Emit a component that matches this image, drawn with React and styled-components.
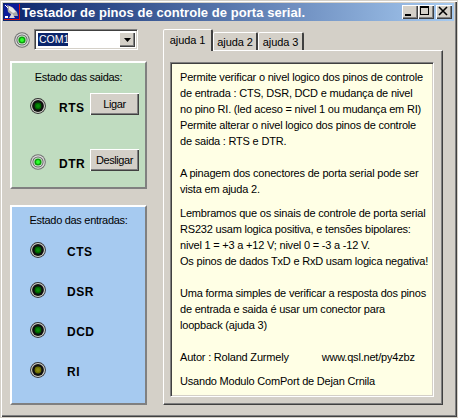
import React from 'react';
import styled, { createGlobalStyle } from 'styled-components';

const GlobalStyle = createGlobalStyle`
  html, body {
    margin: 0;
    padding: 0;
    background: #d4d0c8;
  }
  * {
    box-sizing: border-box;
  }
`;

const LED_COLORS = {
  off: { core: '#006400', hot: '#0a8a0a' },
  amber: { core: '#6e6e00', hot: '#8a8a10' },
};

const Led = ({ state = 'off' }) => {
  if (state === 'on') {
    return (
      <LedIcon viewBox="0 0 16 16">
        <circle cx="8" cy="8" r="7.8" fill="#707070" />
        <circle cx="8" cy="8" r="6.8" fill="#e0e0e0" />
        <circle cx="8" cy="8" r="5.6" fill="#686868" />
        <circle cx="8" cy="8" r="4.6" fill="#d8e8d8" />
        <circle cx="8" cy="8" r="3.6" fill="#0b9f0b" />
        <circle cx="8" cy="8" r="2" fill="#2cff2c" />
      </LedIcon>
    );
  }
  const c = LED_COLORS[state];
  return (
    <LedIcon viewBox="0 0 16 16">
      <circle cx="8" cy="8" r="7.9" fill="#303030" />
      <circle cx="8" cy="8" r="7" fill="#d0d0c8" />
      <circle cx="8" cy="8" r="5.9" fill="#101010" />
      <circle cx="8" cy="8" r="3.4" fill={c.core} />
      <circle cx="8" cy="8" r="2" fill={c.hot} />
    </LedIcon>
  );
};

const AppIcon = () => (
  <AppIconSvg viewBox="0 0 16 16">
    <rect x="0" y="0" width="16" height="16" fill="#d01010" />
    <rect x="0" y="0" width="15" height="15" fill="#0a1a9a" />
    <path d="M3 1 L8 3 L13 8 L14 12 L9 12 L4 8 Z" fill="#a8a8a8" />
    <path d="M5 2 L9 4 L12 8 L9 9 L5 6 Z" fill="#e8e8e8" />
    <path d="M8 9 L5 14 L11 14 Z" fill="#d8d8d8" />
    <path d="M1 1 L4 4" stroke="#ffffff" strokeWidth="1" />
    <rect x="1" y="12" width="3" height="2" fill="#ffffff" />
  </AppIconSvg>
);

const App = () => (
  <Window>
    <GlobalStyle />
    <TitleBar>
      <AppIcon />
      <TitleText>Testador de pinos de controle de porta serial.</TitleText>
      <TitleButtons>
        <CaptionButton aria-label="Minimizar">
          <svg width="14" height="12" viewBox="0 0 14 12">
            <rect x="3" y="9" width="6" height="2" fill="#000" />
          </svg>
        </CaptionButton>
        <CaptionButton aria-label="Maximizar">
          <svg width="14" height="12" viewBox="0 0 14 12">
            <path d="M2 1h9v9H2z M3 3v6h7V3z" fill="#000" fillRule="evenodd" />
          </svg>
        </CaptionButton>
        <CloseButton aria-label="Fechar">
          <svg width="14" height="12" viewBox="0 0 14 12">
            <path d="M3 2l8 8M11 2l-8 8" stroke="#000" strokeWidth="1.6" />
          </svg>
        </CloseButton>
      </TitleButtons>
    </TitleBar>

    <Body>
      <LeftColumn>
        <PortRow>
          <Led state="on" />
          <Combo>
            <ComboValue>COM1</ComboValue>
            <ComboArrow>
              <svg width="7" height="4" viewBox="0 0 7 4">
                <path d="M0 0h7L3.5 4z" fill="#000" />
              </svg>
            </ComboArrow>
          </Combo>
        </PortRow>

        <OutputPanel>
          <PanelTitle>Estado das saidas:</PanelTitle>
          <OutputRows>
            <OutputRow>
              <Led state="off" />
              <PinName $gap={13}>RTS</PinName>
              <Button>Ligar</Button>
            </OutputRow>
            <OutputRow>
              <Led state="on" />
              <PinName $gap={13}>DTR</PinName>
              <Button>Desligar</Button>
            </OutputRow>
          </OutputRows>
        </OutputPanel>

        <InputPanel>
          <PanelTitle>Estado das entradas:</PanelTitle>
          <InputRows>
            <PinRow>
              <Led state="off" />
              <PinName $gap={21}>CTS</PinName>
            </PinRow>
            <PinRow>
              <Led state="off" />
              <PinName $gap={21}>DSR</PinName>
            </PinRow>
            <PinRow>
              <Led state="off" />
              <PinName $gap={21}>DCD</PinName>
            </PinRow>
            <PinRow>
              <Led state="amber" />
              <PinName $gap={21}>RI</PinName>
            </PinRow>
          </InputRows>
        </InputPanel>
      </LeftColumn>

      <TabArea>
        <TabStrip>
          <Tab $width={50} $active>ajuda 1</Tab>
          <Tab $width={45}>ajuda 2</Tab>
          <Tab $width={46}>ajuda 3</Tab>
        </TabStrip>
        <TabPage>
          <HelpBox>
            <HelpBlock>
              <div>Permite verificar o nivel logico dos pinos de controle</div>
              <div>de entrada : CTS, DSR, DCD e mudança de nivel</div>
              <div>no pino RI. (led aceso = nivel 1 ou mudança em RI)</div>
              <div>Permite alterar o nivel logico dos pinos de controle</div>
              <div>de saida : RTS e DTR.</div>
              <br />
              <div>A pinagem dos conectores de porta serial pode ser</div>
              <div>vista em ajuda 2.</div>
            </HelpBlock>
            <HelpBlock>
              <div>Lembramos que os sinais de controle de porta serial</div>
              <div>RS232 usam logica positiva, e tensões bipolares:</div>
              <div>nivel 1 = +3 a +12 V; nivel 0 = -3 a -12 V.</div>
              <div>Os pinos de dados TxD e RxD usam logica negativa!</div>
              <br />
              <div>Uma forma simples de verificar a resposta dos pinos</div>
              <div>de entrada e saida é usar um conector para</div>
              <div>loopback (ajuda 3)</div>
              <br />
              <AuthorLine>
                <span>Autor : Roland Zurmely</span>
                <span>www.qsl.net/py4zbz</span>
              </AuthorLine>
            </HelpBlock>
            <HelpBlock>
              <div>Usando Modulo ComPort de Dejan Crnila</div>
            </HelpBlock>
          </HelpBox>
        </TabPage>
      </TabArea>
    </Body>
  </Window>
);

export default App;

const uiFont = `"Liberation Sans", Arial, sans-serif`;

const Window = styled.div`
  width: 458px;
  height: 418px;
  padding: 2px;
  border: 1px solid #d4d0c8;
  background: #d4d0c8;
  box-shadow: inset 1px 1px #ffffff, inset -1px -1px #404040, inset -2px -2px #808080;
  font-family: ${uiFont};
  font-size: 11px;
  color: #000;
  overflow: hidden;
`;

const TitleBar = styled.div`
  display: flex;
  align-items: center;
  height: 18px;
  width: 451px;
  padding: 0 2px 0 1px;
  background: linear-gradient(to right, #0a246a, #a6caf0);
`;

const AppIconSvg = styled.svg`
  width: 16px;
  height: 16px;
  flex: none;
`;

const TitleText = styled.span`
  margin-left: 2px;
  color: #ffffff;
  font-weight: bold;
  font-size: 13px;
  letter-spacing: 0.05px;
  white-space: nowrap;
`;

const TitleButtons = styled.div`
  display: flex;
  margin-left: auto;
`;

const CaptionButton = styled.div`
  display: flex;
  width: 16px;
  height: 14px;
  background: #d4d0c8;
  box-shadow: inset 1px 1px #ffffff, inset -1px -1px #404040, inset -2px -2px #808080;
`;

const CloseButton = styled(CaptionButton)`
  margin-left: 2px;
`;

const Body = styled.div`
  display: flex;
  padding: 8px 0 0 7px;
`;

const LeftColumn = styled.div`
  display: flex;
  flex-direction: column;
  width: 137px;
  flex: none;
`;

const PortRow = styled.div`
  display: flex;
  align-items: center;
  gap: 4px;
  height: 21px;
  padding-left: 4px;
  margin-bottom: 11px;
`;

const LedIcon = styled.svg`
  width: 16px;
  height: 16px;
  flex: none;
`;

const Combo = styled.div`
  display: flex;
  align-items: center;
  width: 104px;
  height: 21px;
  padding: 2px;
  background: #ffffff;
  border: 1px solid;
  border-color: #808080 #ffffff #ffffff #808080;
  box-shadow: inset 1px 1px #404040, inset -1px -1px #d4d0c8;
`;

const ComboValue = styled.div`
  margin-left: 1px;
  width: 30px;
  height: 13px;
  line-height: 13px;
  padding-left: 1px;
  color: #ffffff;
  background: #0a246a;
  font-size: 10.5px;
  white-space: nowrap;
`;

const ComboArrow = styled.div`
  display: flex;
  align-items: center;
  justify-content: center;
  margin-left: auto;
  width: 16px;
  height: 15px;
  background: #d4d0c8;
  box-shadow: inset 1px 1px #ffffff, inset -1px -1px #404040, inset -2px -2px #808080;
`;

const Panel = styled.div`
  width: 137px;
  border: 2px solid;
  border-color: #ffffff #808080 #808080 #ffffff;
`;

const OutputPanel = styled(Panel)`
  height: 128px;
  padding: 6px 6px 0 18px;
  background: #c0dcc0;
  margin-bottom: 16px;
`;

const InputPanel = styled(Panel)`
  height: 200px;
  padding: 5px 6px 0 18px;
  background: #a6caf0;
`;

const PanelTitle = styled.div`
  margin-left: -18px;
  margin-right: -6px;
  line-height: 16px;
  text-align: center;
  letter-spacing: -0.3px;
`;

const OutputRows = styled.div`
  display: flex;
  flex-direction: column;
  gap: 34px;
  margin-top: 8px;
`;

const InputRows = styled.div`
  display: flex;
  flex-direction: column;
  gap: 24px;
  margin-top: 14px;
`;

const PinRow = styled.div`
  display: flex;
  align-items: center;
  height: 16px;
`;

// LED and label sit a little below the middle of the button beside them
const OutputRow = styled(PinRow)`
  height: 22px;
  padding-top: 4px;
`;

const PinName = styled.span`
  margin-left: ${(props) => props.$gap}px;
  padding-top: 3px;
  font-weight: bold;
  font-size: 12px;
  letter-spacing: 0.5px;
`;

const Button = styled.div`
  display: flex;
  align-items: center;
  justify-content: center;
  margin: -4px 0 0 auto;
  width: 49px;
  height: 22px;
  background: #d4d0c8;
  box-shadow: inset 1px 1px #ffffff, inset -1px -1px #404040, inset -2px -2px #808080;
  letter-spacing: -0.4px;
`;

const TabArea = styled.div`
  display: flex;
  flex-direction: column;
  margin-left: 16px;
  width: 280px;
`;

const TabStrip = styled.div`
  display: flex;
  align-items: flex-end;
  height: 21px;
  position: relative;
  z-index: 1;
`;

const Tab = styled.div`
  display: flex;
  align-items: center;
  justify-content: center;
  width: ${(props) => props.$width}px;
  height: ${(props) => (props.$active ? '22px' : '18px')};
  margin-bottom: ${(props) => (props.$active ? '-1px' : '0')};
  padding-bottom: ${(props) => (props.$active ? '2px' : '0')};
  background: #d4d0c8;
  border-radius: 2px 2px 0 0;
  border-style: solid;
  border-width: 1px 2px 0 1px;
  border-color: #ffffff #404040 transparent #ffffff;
  letter-spacing: -0.1px;
`;

const TabPage = styled.div`
  height: 355px;
  padding: 11px 7px 7px 6px;
  border: 1px solid;
  border-color: #ffffff #404040 #404040 #ffffff;
  box-shadow: inset -1px -1px #808080;
`;

const HelpBox = styled.div`
  display: flex;
  flex-direction: column;
  gap: 8px;
  width: 264px;
  height: 335px;
  padding: 6px 0 0 9px;
  background: #ffffe5;
  border: 1px solid;
  border-color: #808080 #ffffff #ffffff #808080;
  box-shadow: inset 1px 1px #404040, inset -1px -1px #d4d0c8;
`;

const HelpBlock = styled.div`
  line-height: 16px;
  white-space: nowrap;
  letter-spacing: -0.2px;
`;

const AuthorLine = styled.div`
  display: flex;
  gap: 33px;
`;
